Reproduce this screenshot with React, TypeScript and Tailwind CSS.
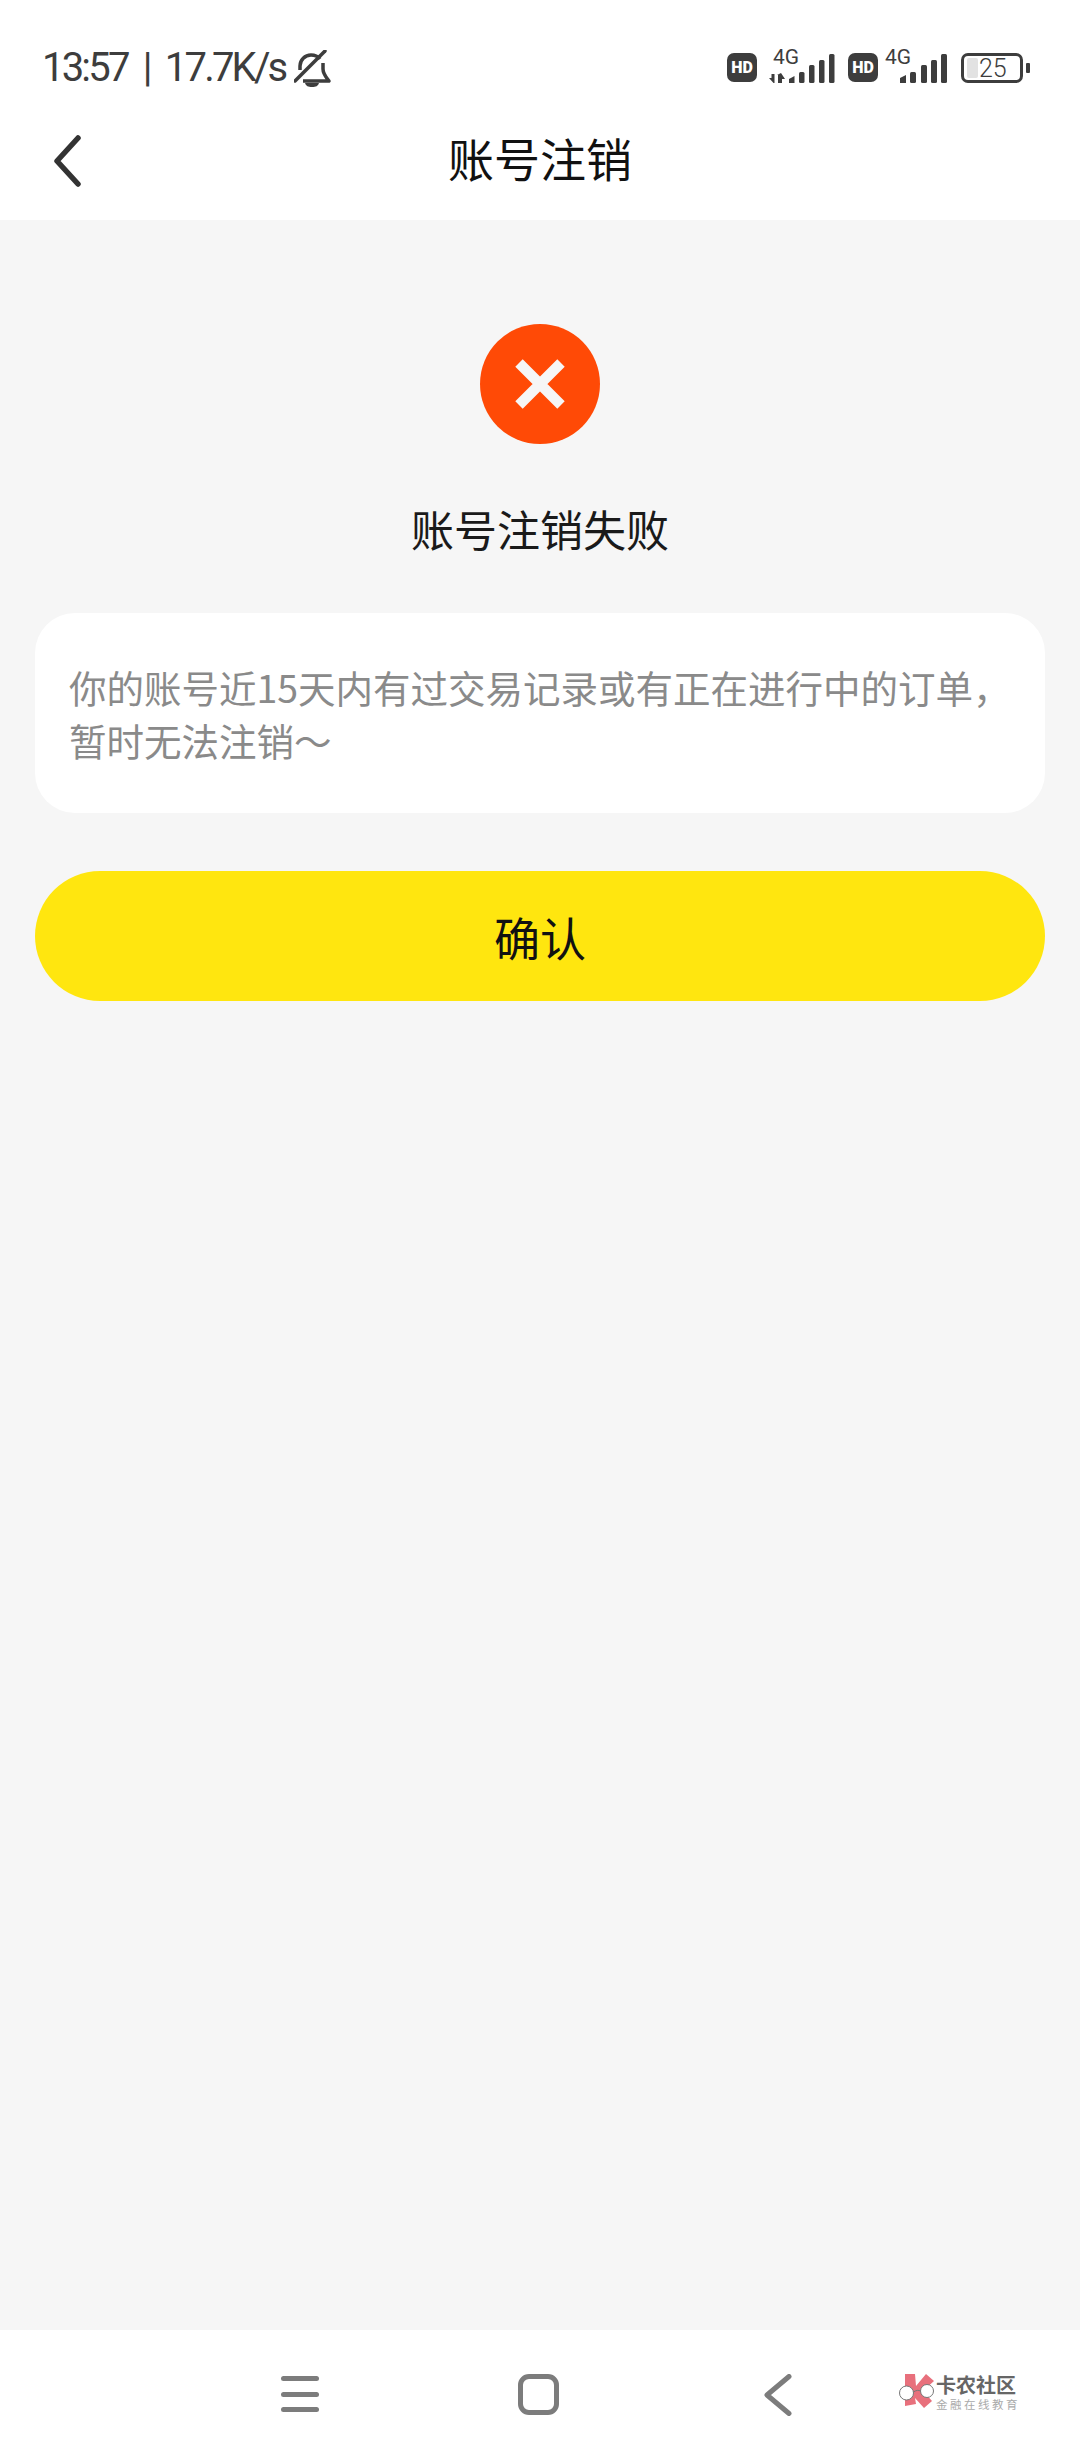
import React from "react";

const CJK = "font-['Noto_Sans_CJK_SC','Noto_Sans',sans-serif]";

function HdBadge() {
  return (
    <div className="flex h-[29px] w-[30px] shrink-0 items-center justify-center rounded-[7px] bg-[#3d3d3d] font-['Roboto',sans-serif] text-[16px] leading-none font-black text-white">
      HD
    </div>
  );
}

function SignalOne() {
  return (
    <div className="relative h-[34px] w-[68px] shrink-0">
      <span className="absolute top-[-3px] left-[4px] font-['Roboto',sans-serif] text-[21px] leading-[20px] text-[#3d3d3d]">4G</span>
      <svg width="68" height="34" viewBox="0 0 68 34" className="block">
        <path d="M0 28h2.500v-4h3v9h-1z" fill="#3d3d3d" />
        <path d="M9 33v-8h-1l4-2 4 6h-3v4z" fill="#3d3d3d" />
        <path d="M20 29l5.500-3V33H20z" fill="#3d3d3d" />
        <rect x="30" y="22" width="5.500" height="11" rx="1.500" fill="#3d3d3d" />
        <rect x="40" y="15" width="5.500" height="18" rx="1.500" fill="#3d3d3d" />
        <rect x="50" y="10" width="5.500" height="23" rx="1.500" fill="#3d3d3d" />
        <rect x="60" y="4" width="5.500" height="29" rx="1.500" fill="#3d3d3d" />
      </svg>
    </div>
  );
}

function SignalTwo() {
  return (
    <div className="relative h-[34px] w-[62px] shrink-0">
      <span className="absolute top-[-3px] left-0 font-['Roboto',sans-serif] text-[21px] leading-[20px] text-[#3d3d3d]">4G</span>
      <svg width="62" height="34" viewBox="0 0 62 34" className="block">
        <path d="M15 28l6-3V33h-6z" fill="#3d3d3d" />
        <rect x="25" y="22" width="6" height="11" rx="1.500" fill="#3d3d3d" />
        <rect x="36" y="15" width="6" height="18" rx="1.500" fill="#3d3d3d" />
        <rect x="46" y="10" width="6" height="23" rx="1.500" fill="#3d3d3d" />
        <rect x="56" y="4" width="6" height="29" rx="1.500" fill="#3d3d3d" />
      </svg>
    </div>
  );
}

function Battery() {
  return (
    <div className="flex shrink-0 items-center gap-[3px]">
      <div className="flex h-[30px] w-[62px] items-center rounded-[7px] border-[3px] border-[#3d3d3d] pl-[3px]">
        <div className="h-[20px] w-[11px] rounded-[2px] bg-[#e2e2e2]" />
        <span className="ml-[1px] font-['Roboto',sans-serif] text-[25px] leading-none font-light text-[#3d3d3d]">25</span>
      </div>
      <div className="h-[10px] w-[4px] rounded-[1px] bg-[#3d3d3d]" />
    </div>
  );
}

function StatusBar() {
  return (
    <div className="flex h-[110px] items-start bg-white pt-[48px] pr-[50px] pl-[42px]">
      <span className="font-['Roboto',sans-serif] text-[40px] leading-[40px] tracking-[-2.800px] [word-spacing:8px] whitespace-nowrap text-[#3d3d3d]">13:57 | 17.7K/s</span>
      <svg width="38" height="38" viewBox="0 0 38 38" fill="none" className="mt-[2px] ml-[9px] shrink-0">
        <path d="M1 31L31 1" stroke="#3d3d3d" strokeWidth="3.500" strokeLinecap="round" />
        <path d="M6 20V16C6 10 11 5 17 5c4 0 7 1.500 9 4" stroke="#3d3d3d" strokeWidth="3.500" />
        <path d="M29 13V19C29 24 32 27 35 31H9" stroke="#3d3d3d" strokeWidth="3.500" strokeLinejoin="round" />
        <path d="M11 33h14c-1 3-3 4-7 4s-6-1-7-4z" fill="#3d3d3d" />
      </svg>
      <div className="-mt-[1px] ml-auto flex items-start">
        <div className="mt-[6px]"><HdBadge /></div>
        <div className="mt-[3px] ml-[12px]"><SignalOne /></div>
        <div className="mt-[6px] ml-[11px]"><HdBadge /></div>
        <div className="mt-[3px] ml-[7px]"><SignalTwo /></div>
        <div className="mt-[6px] ml-[14px]"><Battery /></div>
      </div>
    </div>
  );
}

function Header() {
  return (
    <div className="relative flex h-[110px] items-start justify-center bg-white pt-[17px]">
      <svg width="30" height="52" viewBox="0 0 30 52" fill="none" className="absolute top-[25px] left-[52px]">
        <path d="M26 3L5 26l21 23" stroke="#333333" strokeWidth="5.500" strokeLinecap="round" strokeLinejoin="round" />
      </svg>
      <h1 className={`${CJK} text-[46px] leading-[60px] font-normal text-[#111111]`}>账号注销</h1>
    </div>
  );
}

function NavLogo() {
  return (
    <div className="flex items-start">
      <svg width="38" height="36" viewBox="0 0 38 36" className="shrink-0">
        <path d="M7 1h10l1 12L28 1l8 7-11 10 9 10-8 7-9-10 1 6-11 2z" fill="#e8707c" />
        <circle cx="8.500" cy="20" r="7" fill="#ffffff" stroke="#777777" strokeWidth="1" />
        <circle cx="29" cy="18" r="6.500" fill="#ffffff" stroke="#777777" strokeWidth="1" />
        <path d="M15.500 19c3-2 5-2 7-1" stroke="#777777" strokeWidth="1" fill="none" />
      </svg>
      <div className="flex flex-col">
        <span className={`${CJK} mt-[2px] text-[20px] leading-[20px] font-bold whitespace-nowrap text-[#666666]`}>卡农社区</span>
        <span className={`${CJK} mt-[2px] text-[11.500px] leading-[14px] tracking-[2.500px] whitespace-nowrap text-[#aaaaaa]`}>金融在线教育</span>
      </div>
    </div>
  );
}

function NavBar() {
  return (
    <div className="flex h-[130px] items-start bg-white pt-[44px] pl-[281px]">
      <div className="mt-[2px] flex h-[36px] w-[38px] flex-col justify-between">
        <div className="h-[5px] rounded-full bg-[#7c7c7c]" />
        <div className="h-[5px] rounded-full bg-[#7c7c7c]" />
        <div className="h-[5px] rounded-full bg-[#7c7c7c]" />
      </div>
      <div className="ml-[199px] h-[41px] w-[41px] rounded-[11px] border-[5px] border-[#7c7c7c]" />
      <svg width="28" height="42" viewBox="0 0 28 42" fill="none" className="ml-[205px] shrink-0">
        <path d="M25 2.500L3 21l22 18.500" stroke="#7c7c7c" strokeWidth="5" strokeLinecap="round" strokeLinejoin="round" />
      </svg>
      <div className="-mt-[1px] ml-[106px]"><NavLogo /></div>
    </div>
  );
}

export default function App() {
  return (
    <div className="flex h-[2460px] w-[1080px] flex-col overflow-hidden bg-[#f6f6f6]">
      <StatusBar />
      <Header />
      <main className="flex flex-1 flex-col items-center px-[35px] pt-[104px]">
        <div className="flex h-[120px] w-[120px] items-center justify-center rounded-full bg-[#ff4a06]">
          <svg width="52" height="52" viewBox="0 0 52 52">
            <path d="M5 5L47 47M47 5L5 47" stroke="#f6f6f6" strokeWidth="10.500" />
          </svg>
        </div>
        <h2 className={`${CJK} mt-[52px] mb-[3px] text-[43px] leading-[64px] font-normal text-[#1a1a1a]`}>账号注销失败</h2>
        <div className="mt-[50px] h-[200px] w-full rounded-[40px] bg-white px-[34px] pt-[47px]">
          <p className={`${CJK} text-[37.500px] leading-[53px] whitespace-nowrap text-[#8a8a8a]`}>
            你的账号近15天内有过交易记录或有正在进行中的订单，<br />暂时无法注销～
          </p>
        </div>
        <button className={`${CJK} mt-[58px] flex h-[130px] w-full items-center justify-center rounded-[65px] bg-[#ffe60f] text-[46px] font-normal text-[#111111]`}>
          确认
        </button>
      </main>
      <NavBar />
    </div>
  );
}
